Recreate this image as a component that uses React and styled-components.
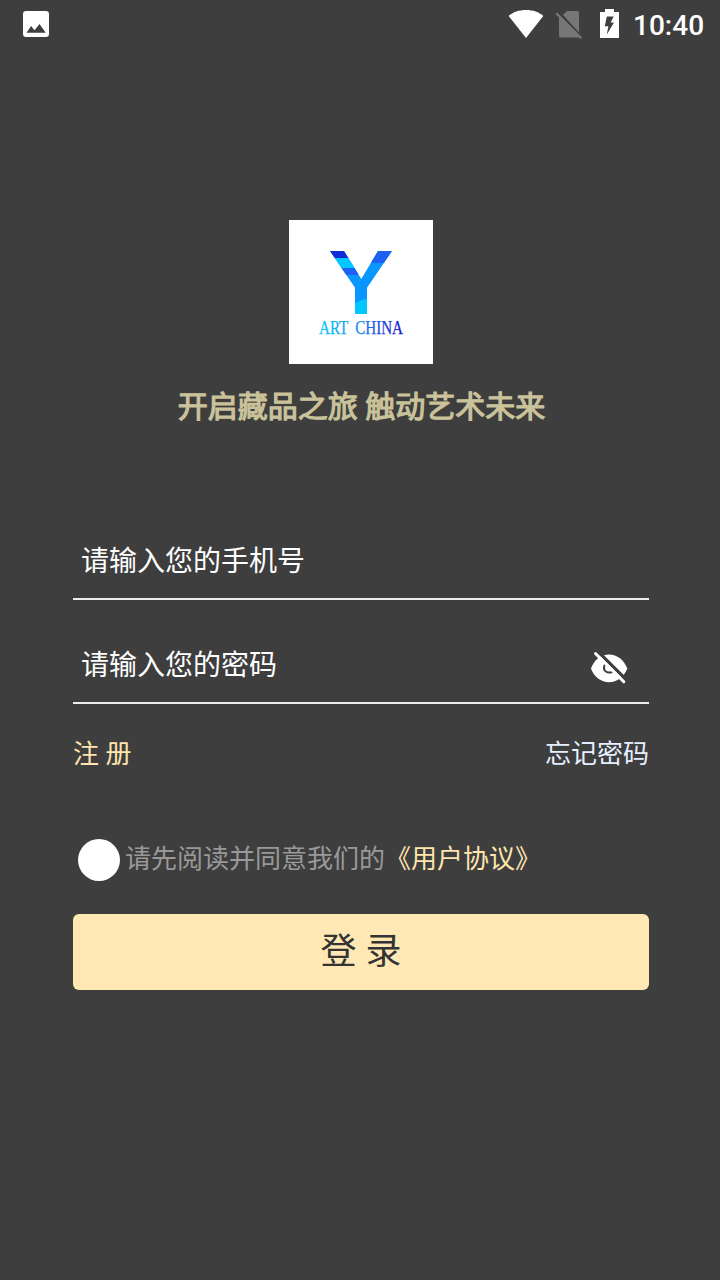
import React from "react";
import styled, { createGlobalStyle } from "styled-components";

const GlobalStyle = createGlobalStyle`
  *, *::before, *::after { box-sizing: border-box; }
  body {
    margin: 0;
    background: #3e3e3e;
    font-family: Roboto, "Noto Sans CJK SC", sans-serif;
  }
  button, input { font: inherit; }
`;

const Screen = styled.div`
  width: 720px;
  height: 1280px;
  display: flex;
  flex-direction: column;
  background: #3e3e3e;
  overflow: hidden;
`;

const StatusBar = styled.header`
  flex: none;
  height: 48px;
  display: flex;
  align-items: center;
  justify-content: space-between;
  padding: 0 16px 0 22px;
`;

const StatusGroup = styled.div`
  display: flex;
  align-items: center;
`;

const StatusIcon = styled.svg`
  display: block;
  height: 48px;
  width: ${(p) => p.$width}px;
`;

const Clock = styled.span`
  width: 71px;
  margin-left: 13px;
  font-size: 28px;
  font-weight: 500;
  line-height: 46px;
  padding-top: 4px;
  color: #fff;
`;

const Main = styled.main`
  display: flex;
  flex-direction: column;
  padding: 172px 71px 0 73px;
`;

const Logo = styled.svg`
  display: block;
  align-self: center;
  width: 144px;
  height: 144px;
  background: #fff;
`;

const Slogan = styled.h1`
  margin: 21px 0 0;
  padding-left: 1px;
  height: 44px;
  font-size: 30px;
  line-height: 44px;
  font-weight: 400;
  -webkit-text-stroke: 1.2px #c9c29a;
  text-align: center;
  white-space: nowrap;
  color: #c9c29a;
`;

const Field = styled.label`
  display: flex;
  align-items: center;
  height: 80px;
  margin-top: ${(p) => p.$gap}px;
  padding: 0 20px 0 8px;
  border-bottom: 2px solid #ededea;
`;

const Input = styled.input`
  flex: 1;
  min-width: 0;
  height: 40px;
  margin-top: 5px;
  padding: 0;
  border: 0;
  outline: 0;
  background: transparent;
  font-size: 28px;
  color: #fff;
  &::placeholder { color: #fff; opacity: 1; }
`;

const EyeIcon = styled.svg`
  width: 40px;
  height: 36px;
  margin-top: 8px;
`;

const LinkRow = styled.div`
  display: flex;
  justify-content: space-between;
  margin-top: 30px;
`;

const TextLink = styled.a`
  font-size: 26px;
  line-height: 40px;
  color: ${(p) => p.$color};
`;

const Agreement = styled.div`
  display: flex;
  align-items: center;
  height: 42px;
  margin-top: 65px;
  padding-left: 5px;
`;

const Radio = styled.span`
  width: 42px;
  height: 42px;
  margin-right: 5px;
  border-radius: 50%;
  background: #fff;
`;

const AgreementText = styled.span`
  font-size: 26px;
  line-height: 38px;
  padding-bottom: 2px;
  color: ${(p) => p.$color};
`;

const LoginButton = styled.button`
  height: 76px;
  margin-top: 33px;
  padding: 0;
  border: 0;
  border-radius: 6px;
  background: #ffe8b4;
  color: #333;
  font-size: 36px;
  line-height: 76px;
`;

export default function App() {
  return (
    <>
      <GlobalStyle />
      <Screen>
        <StatusBar>
          <StatusIcon $width={28} viewBox="0 0 28 48">
            <path
              fill="#fff"
              fillRule="evenodd"
              d="M4 11h20a3 3 0 0 1 3 3v20a3 3 0 0 1-3 3H4a3 3 0 0 1-3-3V14a3 3 0 0 1 3-3ZM4.500 32.700h19.200l-6.200-8.700-5 6.300-3.400-4.200Z"
            />
          </StatusIcon>
          <StatusGroup>
            <StatusIcon $width={112} viewBox="508 0 112 48">
              <path fill="#fff" d="M526 38 508.700 16C513 12 519 10 526 10s13 2 17.300 6Z" />
              <path fill="#777" d="M567 11h10a2 2 0 0 1 2 2v19.500L563 15Z" />
              <path fill="#777" d="M559 15.500 580 36.500 578.500 37.500H561a2 2 0 0 1-2-2Z" />
              <path stroke="#777" strokeWidth="2.300" d="m556.300 13.300 25 25" />
              <path
                fill="#fff"
                fillRule="evenodd"
                d="M605 9h9v3h5v26h-19V12h5ZM606.800 16.500 604.800 26.200H608.400L606.800 34.500 614 22.500H610.600L613.700 16.500Z"
              />
            </StatusIcon>
            <Clock>10:40</Clock>
          </StatusGroup>
        </StatusBar>

        <Main>
          <Logo viewBox="0 0 144 144" role="img" aria-label="Art China">
            <defs>
              <clipPath id="mark">
                <path d="M41 31H55L72.300 59 89 31H103L78 67.700V94H66V67.700Z" />
              </clipPath>
              <linearGradient id="word" gradientUnits="userSpaceOnUse" x1="30" x2="114" y1="0" y2="0">
                <stop offset="0" stopColor="#06cdf8" />
                <stop offset="0.5" stopColor="#1688ea" />
                <stop offset="0.72" stopColor="#1b4fe0" />
                <stop offset="1" stopColor="#1522cc" />
              </linearGradient>
            </defs>
            <g clipPath="url(#mark)" shapeRendering="crispEdges">
              <path fill="#0996ff" d="M40 30h64v65H40Z" />
              <path fill="#122bd8" d="M40 30h32v8H40Z" />
              <path fill="#00c8ff" d="M40 38h28v10H40Z" />
              <path fill="#1d60f2" d="M40 48h29v7H40ZM76 30h28v13H76Z" />
              <path fill="#00c8ff" d="M65 83.200 79 78v17H65Z" />
            </g>
            <text
              x="30"
              y="113.500"
              fontFamily="Liberation Serif, serif"
              fontSize="18"
              wordSpacing="4"
              textLength="84"
              lengthAdjust="spacingAndGlyphs"
              fill="url(#word)"
              stroke="url(#word)"
              strokeWidth="0.250"
            >
              ART CHINA
            </text>
          </Logo>
          <Slogan>开启藏品之旅 触动艺术未来</Slogan>

          <Field $gap={91}>
            <Input type="text" placeholder="请输入您的手机号" />
          </Field>
          <Field $gap={24}>
            <Input type="password" placeholder="请输入您的密码" />
            <EyeIcon viewBox="0 0 40 36" fill="none">
              <path
                fill="#fff"
                d="M2 19.500C5 11 12 5.500 20 5.500S35 11 38.300 19.500C35 28 28 33.200 20 33.200S5 28 2 19.500Z"
              />
              <path stroke="#3e3e3e" strokeWidth="2" strokeLinecap="round" d="M16 15.500c-2.800 5 .8 9.700 7.200 7.500" />
              <path stroke="#3e3e3e" strokeWidth="3.200" d="M9.300 2.800 38 31.500" />
              <path stroke="#fff" strokeWidth="3" strokeLinecap="round" d="M6.500 4.500 34.800 32.800" />
            </EyeIcon>
          </Field>

          <LinkRow>
            <TextLink $color="#ffe5ae">注 册</TextLink>
            <TextLink $color="#e6efff">忘记密码</TextLink>
          </LinkRow>

          <Agreement>
            <Radio role="radio" aria-checked="false" />
            <AgreementText $color="#999">请先阅读并同意我们的</AgreementText>
            <AgreementText $color="#ffe5ae">《用户协议》</AgreementText>
          </Agreement>

          <LoginButton type="button">登 录</LoginButton>
        </Main>
      </Screen>
    </>
  );
}
